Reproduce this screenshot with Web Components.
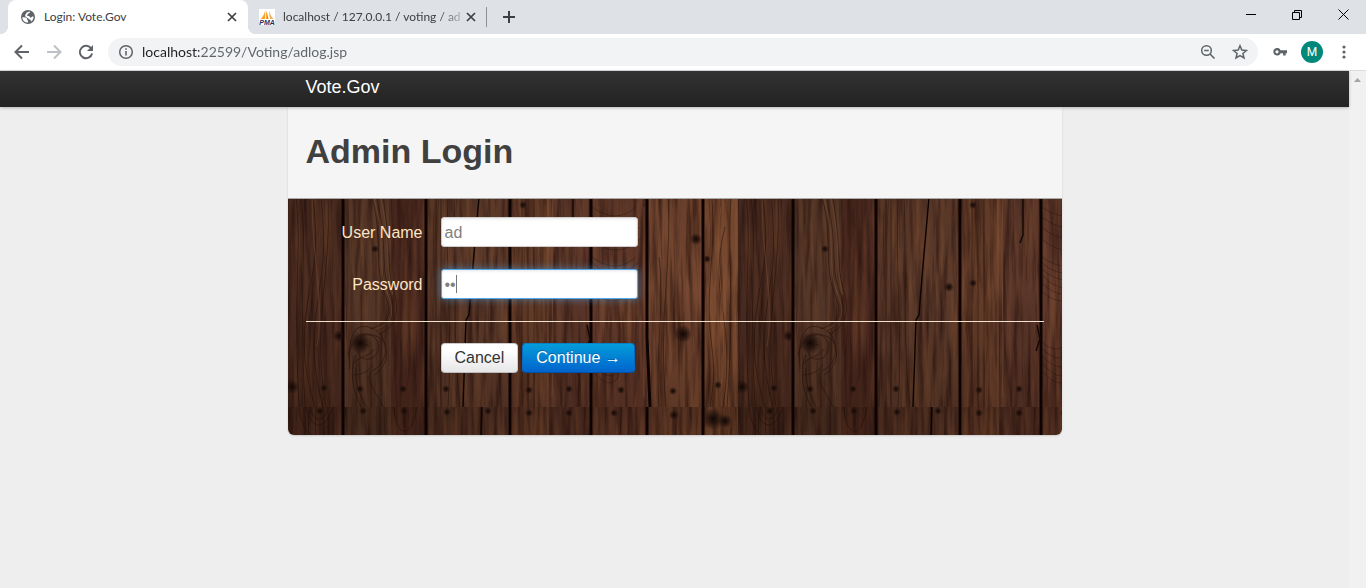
<!DOCTYPE html>
<html lang="en">
<head>
<meta charset="utf-8">
<title>Login: Vote.Gov</title>
<style>
html, body { margin: 0; height: 100%; }
body { font-family: "Liberation Sans", Arial, sans-serif; background: #eee; overflow: hidden; }
</style>
</head>
<body>
<browser-window>
  <tab-strip slot="tabs">
    <browser-tab active label="Login: Vote.Gov">
      <svg width="16" height="16" viewBox="0 0 16 16" aria-hidden="true"><circle cx="8" cy="8" r="7" fill="#5f6368"/><path d="M2.2 8.4c1.8-.5 3.500-.2 4.400.7.8.8.3 1.700 1.100 2.300.8.5.4 1.300.2 2.200C5 13.700 2.500 11.500 2.200 8.400zM6.200 4.300C7 3.200 8.400 2.500 9.800 2.500c.6.8-.2 1.500-1 1.800-.9.300-.5 1.100-1.300 1.400-.9.300-.4 1.200.5 1.200 1.200 0 1.700.4 1.900 1.200.3 1 1.300.7 1.800-.1.500-.7 1.200-.6 1.900-.2-.1 2.300-1.200 4-2.700 4.900.2-1-.2-1.700-1-2.100-1.200-.5-1.500-1.400-2.600-1.900C6.100 8.100 5 7.600 5.100 6.500c.1-.9.900-1.200 1.100-2.200z" fill="#fff"/></svg>
    </browser-tab>
    <browser-tab label="localhost / 127.0.0.1 / voting / ad">
      <svg width="16" height="16" viewBox="0 0 16 16" aria-hidden="true"><rect width="16" height="16" fill="#fff"/><path d="M6.200.8C5.800 4 4.200 7.600 1.600 10h4.600z" fill="#f9a326"/><path d="M7.200 2v8h2.300C8.900 7 8.300 4 7.200 2z" fill="#f48b00"/><path d="M10.200 1.500c-.2 3 .2 6 .9 8.500h3.400c-2.300-2.200-3.600-5.200-4.300-8.500z" fill="#f7b04a"/><text x="8" y="16" font-family="Liberation Sans, sans-serif" font-size="7" font-weight="700" font-style="italic" text-anchor="middle" fill="#2b2a5e">PMA</text></svg>
    </browser-tab>
  </tab-strip>
  <browser-toolbar slot="toolbar"></browser-toolbar>
  <site-navbar></site-navbar>
  <login-card heading="Admin Login"><login-form></login-form></login-card>
</browser-window>

<script>
const define = (name, markup, setup) => {
  const template = document.createElement('template');
  template.innerHTML = markup;
  customElements.define(name, class extends HTMLElement {
    constructor() {
      super();
      this.attachShadow({ mode: 'open' }).append(template.content.cloneNode(true));
    }
    connectedCallback() { if (setup) setup(this, this.shadowRoot); }
  });
};

define('browser-window', `
<style>
:host { display: flex; flex-direction: column; min-height: 100vh; }
.view { flex: 1; display: flex; border-top: 1px solid #dadce0; }
main { flex: 1; min-width: 0; background: #eee; }
.track { flex: 0 0 17px; background: #f1f1f1; text-align: center; }
.track svg { display: block; }
</style>
<slot name="tabs"></slot>
<slot name="toolbar"></slot>
<div class="view">
  <main><slot></slot></main>
  <div class="track" aria-hidden="true"><svg width="17" height="17"><path d="M5 11h7L8.500 7z" fill="#a3a3a3"/></svg></div>
</div>`);

define('tab-strip', `
<style>
:host { display: flex; height: 34px; background: #dee1e6; padding-left: 8px; }
button { border: 0; background: none; padding: 0; display: grid; place-items: center; }
.new { width: 45px; border-left: 1px solid #8d9095; height: 20px; margin-top: 7px; }
.caption { margin-left: auto; display: flex; }
.caption button { width: 46px; height: 29px; }
</style>
<slot></slot>
<button class="new" aria-label="New tab"><svg width="14" height="14"><path d="M7 1v12M1 7h12" stroke="#3c4043" stroke-width="2"/></svg></button>
<div class="caption">
  <button aria-label="Minimize"><svg width="10" height="11"><path d="M0 5.500h10" stroke="#000"/></svg></button>
  <button aria-label="Restore"><svg width="10" height="10"><path d="M.5 2.500h7v7h-7zM2.500 2.500v-2h7v7h-2" fill="none" stroke="#000"/></svg></button>
  <button aria-label="Close"><svg width="11" height="11"><path d="M.5.5l10 10M10.500.5l-10 10" stroke="#000"/></svg></button>
</div>`);

define('browser-tab', `
<style>
:host { display: flex; align-items: center; width: 240px; height: 34px; box-sizing: border-box; padding: 0 10px 0 12px; color: #3c4043; font: 12px/16px Lato, "Noto Sans", sans-serif; }
:host([active]) { background: #fff; border-radius: 8px 8px 0 0; position: relative; }
:host([active])::before, :host([active])::after { content: ""; position: absolute; bottom: 0; width: 8px; height: 8px; }
:host([active])::before { left: -8px; background: radial-gradient(circle at 0 0, #dee1e600 8px, #fff 8px); }
:host([active])::after { right: -8px; background: radial-gradient(circle at 100% 0, #dee1e600 8px, #fff 8px); }
slot { display: block; flex: 0 0 16px; height: 16px; }
.label { flex: 1; overflow: hidden; white-space: nowrap; margin-left: 8px; }
:host(:not([active])) { width: 238px; padding: 0 9px 0 11px; }
:host(:not([active])) .label { -webkit-mask: linear-gradient(90deg, #000 156px, #0003 180px); mask: linear-gradient(90deg, #000 156px, #0003 180px); }
button { border: 0; background: none; padding: 0; width: 12px; height: 12px; flex: none; }
button svg { display: block; }
</style>
<slot></slot>
<span class="label"></span>
<button aria-label="Close tab"><svg width="12" height="12"><path d="M2 2l8 8M10 2l-8 8" stroke="#3c4043" stroke-width="1.700"/></svg></button>`,
(host, root) => { root.querySelector('.label').textContent = host.getAttribute('label'); });

define('browser-toolbar', `
<style>
:host { display: flex; align-items: center; height: 36px; background: #fff; padding: 0 12px; }
button { border: 0; background: none; padding: 0; width: 20px; height: 20px; flex: none; }
svg { display: block; }
.nav { display: flex; gap: 12px; }
.omnibox { flex: 1; display: flex; align-items: center; height: 28px; margin: 0 12px; padding: 0 8px; border-radius: 14px; background: #f1f3f4; }
input { flex: 1; min-width: 0; border: 0; outline: 0; padding: 0; margin: 0 6px; height: 20px; font: 14px/20px Lato, "Noto Sans", sans-serif; color: #5f6368;
  background: linear-gradient(90deg, #202124 57px, #5f6368 57px); -webkit-background-clip: text; background-clip: text; -webkit-text-fill-color: transparent; }
.end { display: flex; gap: 12px; }
.avatar { width: 22px; height: 22px; border-radius: 50%; background: #00897b; color: #fff; font: 12px/22px Roboto, sans-serif; text-align: center; }
.right { display: flex; align-items: center; gap: 11px; }
</style>
<div class="nav">
  <button aria-label="Back"><svg width="20" height="20"><path d="M17 10H4M10 3.500L3.500 10l6.500 6.500" fill="none" stroke="#5f6368" stroke-width="2"/></svg></button>
  <button aria-label="Forward"><svg width="20" height="20"><path d="M3 10h13M10 3.500l6.500 6.500-6.500 6.500" fill="none" stroke="#bdc1c6" stroke-width="2"/></svg></button>
  <button aria-label="Reload"><svg width="20" height="20"><path d="M15.300 6.700A6.200 6.200 0 1 0 16.100 11.500" fill="none" stroke="#5f6368" stroke-width="2"/><path d="M17 3v6h-6z" fill="#5f6368"/></svg></button>
</div>
<div class="omnibox">
  <button aria-label="View site information"><svg width="20" height="20"><circle cx="10" cy="10" r="6.300" fill="none" stroke="#5f6368" stroke-width="1.500"/><path d="M10 9v4.500M10 6.200v1.600" stroke="#5f6368" stroke-width="1.600"/></svg></button>
  <input type="text" aria-label="Address" spellcheck="false" value="localhost:22599/Voting/adlog.jsp">
  <div class="end">
    <button aria-label="Zoom"><svg width="20" height="20"><circle cx="8.500" cy="8.500" r="4.800" fill="none" stroke="#5f6368" stroke-width="1.500"/><path d="M12 12l4.500 4.500M6.200 8.500h4.600" stroke="#5f6368" stroke-width="1.600"/></svg></button>
    <button aria-label="Bookmark this page"><svg width="20" height="20"><path d="M10 3.800l1.800 4.300 4.600.4-3.500 3 1.100 4.500-4-2.400-4 2.400 1.100-4.500-3.500-3 4.600-.4z" fill="none" stroke="#5f6368" stroke-width="1.500"/></svg></button>
  </div>
</div>
<div class="right">
  <button aria-label="Passwords"><svg width="20" height="20"><path d="M10.600 8.300H17v3h-1.300v2.200h-2.600v-2.200h-2.500a3.800 3.800 0 1 1 0-3zM7 8.200a1.600 1.600 0 1 0 0 3.200 1.600 1.600 0 0 0 0-3.200z" fill="#5f6368"/></svg></button>
  <button class="avatar" aria-label="Profile">M</button>
  <button aria-label="Menu"><svg width="20" height="20" fill="#5f6368"><circle cx="10" cy="5" r="1.600"/><circle cx="10" cy="10" r="1.600"/><circle cx="10" cy="15" r="1.600"/></svg></button>
</div>`);

define('site-navbar', `
<style>
:host { display: block; height: 36px; position: relative; z-index: 1; background: linear-gradient(#333, #222); box-shadow: 0 1px 3px rgba(0,0,0,.25); }
nav { max-width: 738px; margin: 0 auto; padding: 0 18px; }
a { color: #fff; text-decoration: none; font-size: 18px; line-height: 32px; display: inline-block; }
</style>
<nav><a href="#">Vote.Gov</a></nav>`);

define('wood-panels', `
<style>
:host { display: block; overflow: hidden; }
svg { display: block; width: 100%; height: 100%; }
</style>
<svg aria-hidden="true">
  <defs>
    <filter id="grain" x="0" y="0" width="100%" height="100%" color-interpolation-filters="sRGB">
      <feTurbulence type="fractalNoise" baseFrequency="0.2 0.012" numOctaves="4" seed="7"/>
      <feColorMatrix values="0 0 0 0 .13  0 0 0 0 .05  0 0 0 0 .035  2.200 0 0 0 -.850"/>
    </filter>
    <filter id="sheen" x="0" y="0" width="100%" height="100%" color-interpolation-filters="sRGB">
      <feTurbulence type="fractalNoise" baseFrequency="0.14 0.012" numOctaves="4" seed="23"/>
      <feColorMatrix values="0 0 0 0 .6  0 0 0 0 .37  0 0 0 0 .22  0 2.200 0 0 -1"/>
    </filter>
    <linearGradient id="shade" x2="0" y2="1"><stop offset="0" stop-color="#140500" stop-opacity=".3"/><stop offset=".3" stop-color="#140500" stop-opacity=".08"/><stop offset=".6" stop-color="#140500" stop-opacity="0"/><stop offset="1" stop-color="#140500" stop-opacity=".2"/></linearGradient>
    <linearGradient id="side"><stop offset="0" stop-color="#100400" stop-opacity=".22"/><stop offset=".7" stop-color="#100400" stop-opacity="0"/></linearGradient>
    <radialGradient id="knot"><stop offset="0" stop-color="#100604"/><stop offset=".45" stop-color="#1e0f0a" stop-opacity=".75"/><stop offset="1" stop-color="#1e0f0a" stop-opacity="0"/></radialGradient>
    <pattern id="planks" width="450" height="300" patternUnits="userSpaceOnUse">
      <path fill="#593629" d="M0 0h55v300H0z"/>
      <path fill="#61402f" d="M55 0h48v300H55z"/>
      <path fill="#542f24" d="M103 0h35v300h-35z"/>
      <path fill="#633f2e" d="M138 0h84v300h-84z"/>
      <path fill="#69402c" d="M222 0h39v300h-39z"/>
      <path fill="#5c372a" d="M261 0h41v300h-41z"/>
      <path fill="#61392a" d="M302 0h57v300h-57z"/>
      <path fill="#70442f" d="M359 0h56v300h-56z"/>
      <path fill="#794a30" d="M415 0h35v300h-35z"/>
      <g opacity=".7"><rect width="450" height="300" filter="url(#grain)"/></g>
      <g opacity=".45"><rect width="450" height="300" filter="url(#sheen)"/></g>
      <g fill="none" stroke="#241008" stroke-opacity=".55">
        <path d="M22 0c-8 60 14 110 2 170s-9 90 3 130M28 0c-4 50 14 112 5 172s-10 80 2 128M35 0c2 60 9 100 3 160s-8 90 0 140M8 90c6 50-3 90 3 210M13 90c6 50-2 90 4 210"/>
        <path d="M84 90c11 40 2 70 12 95s4 31-14 37M88 90c12 40 4 70 13 93s2 35-12 40M95 90c8 50 3 70 11 95s-4 38-15 42"/>
        <path d="M62 262c-3-42 9-47 24-40s15 33 1 40 1 22 8 38M60 248c4-18 18-24 30-18s12 28-4 38M69 230c10-8 24 0 21 13s-18 11-20 2 7-10 11-6M66 256c6-7 15-6 20-14M65 268c6 0 16-3 20-10M73 300c-10-20-11-40-5-52M78 300c-9-18-11-27-10-39"/>
        <path d="M18 0c4 14 8 18 13 18s10-6 14-18M22 0c3 9 5 12 9 12s7-4 9-12M11 0c2 20 10 30 20 30M106 0c2 20 6 24 11 24s9-8 12-24"/>
        <path stroke-opacity=".4" d="M304 150q24 18 44 0M304 156q24 20 46 0M304 162q24 22 48 0M304 168q24 26 46 0M304 176q22 22 42 0M304 185q22 18 40 0M304 235q16 14 24 0M304 242q20 18 30 0M304 249q22 22 32 0M304 256q22 26 30 0M304 264q22 24 28 0M304 100q24 18 44 0M304 110q24 20 46 0M304 120q24 22 48 0M304 132q24 22 48 0"/>
        <path d="M424 92c4 50-6 90-2 130s6 40 0 78M437 120c-18 70 12 90-2 180M443 90c-4 60 4 100-4 210M380 90c4 70-10 120-2 210M371 150c6 50-4 90 0 150"/>
        <path d="M148 90v210M153 90v210M160 90c-3 70 5 140 0 210M166 90c3 70-2 140 6 210M234 90v210M240 90v210M246 90v210"/>
      </g>
      <g fill="none" stroke="#8a5938" stroke-opacity=".6"><path d="M86 92c12 40 3 68 13 93s3 33-12 38M93 92c10 44 4 70 12 96M57 200v100M25 90c-4 40 12 100 4 150M260 0v300M265 90c-3 80 2 140-1 200M448 90v210M362 240v60M356 100v190M433 100c-9 60 9 110 0 180"/></g>
      <rect width="450" height="300" fill="url(#shade)"/>
      <rect width="450" height="300" fill="url(#side)"/>
      <g fill="none" stroke="#0d0302" stroke-width="3"><path d="M55 0v300M138 0v300M222 0v300M303 0v300M359 0v230l3 70M415 0v300"/></g>
      <path d="M194 0l-3 90-7 80-3 38-3 5-3 87" fill="none" stroke="#0d0402" stroke-width="1.500"/>
      <path d="M285 92v36l-3 8M299 218l3 14-4 12" fill="none" stroke="#150704" stroke-width="1.500"/>
      <g fill="url(#knot)"><circle cx="72" cy="236" r="11"/><circle cx="51" cy="229" r="6"/><circle cx="4" cy="280" r="7"/><circle cx="395" cy="227" r="9"/><circle cx="408" cy="132" r="6"/><circle cx="419" cy="152" r="4"/><circle cx="87" cy="142" r="4"/><circle cx="235" cy="98" r="4"/><circle cx="235" cy="176" r="4"/><circle cx="211" cy="180" r="5"/><circle cx="425" cy="12" r="11"/><circle cx="437" cy="14" r="7"/></g>
      <g fill="url(#knot)"><circle cx="36" cy="281" r="4"/><circle cx="72" cy="282" r="4"/><circle cx="115" cy="282" r="4"/><circle cx="158" cy="282" r="4"/><circle cx="241" cy="283" r="4"/><circle cx="281" cy="282" r="4"/><circle cx="333" cy="283" r="4"/><circle cx="385" cy="284" r="4"/><circle cx="430" cy="278" r="4"/><circle cx="32" cy="4" r="4"/><circle cx="75" cy="4" r="4"/><circle cx="116" cy="4" r="4"/><circle cx="159" cy="5" r="4"/><circle cx="200" cy="4" r="4"/><circle cx="241" cy="6" r="4"/><circle cx="281" cy="6" r="4"/><circle cx="326" cy="6" r="4"/><circle cx="386" cy="8" r="5"/></g>
    </pattern>
  </defs>
  <rect width="100%" height="100%" fill="url(#planks)"/>
</svg>`);

define('login-card', `
<style>
:host { display: block; position: relative; max-width: 774px; margin: 0 auto; border-radius: 0 0 6px 6px; box-shadow: 0 1px 2px rgba(0,0,0,.15); }
wood-panels { position: absolute; inset: 0; border-radius: 0 0 6px 6px; }
header { position: relative; background: #f5f5f5; border-bottom: 1px solid #aaa; padding: 23px 18px 25px; }
h1 { margin: 0; font-size: 34px; line-height: 43px; color: #404040; }
section { position: relative; }
</style>
<wood-panels></wood-panels>
<header><h1></h1></header>
<section><slot></slot></section>`,
(host, root) => { root.querySelector('h1').textContent = host.getAttribute('heading'); });

define('login-form', `
<style>
:host { display: block; color: #ffe4c4; font-size: 16px; }
form { padding: 18px 18px 62px; }
.row { display: grid; grid-template-columns: 117px 197px; column-gap: 18px; align-items: center; margin-bottom: 22px; }
label { text-align: right; line-height: 20px; padding-top: 2px; }
.field { position: relative; }
input { display: block; width: 100%; height: 30px; box-sizing: border-box; border: 1px solid #ccc; border-radius: 3px; padding: 5px 3px 3px; background: #fff; color: #808080; font: 16px/20px "Liberation Sans", Arial, sans-serif; box-shadow: inset 0 1px 3px rgba(0,0,0,.1); outline: 0; }
input.focused { border-color: #52a8ec; box-shadow: inset 0 1px 3px rgba(0,0,0,.1), 0 0 8px rgba(82,168,236,.6); }
.caret { position: absolute; left: 15px; top: 6px; width: 1px; height: 18px; background: #777; }
hr { border: 0; height: 1px; margin: 0 0 21px; background: #f0e2cf; }
.actions { display: flex; gap: 4px; padding-left: 135px; }
button { height: 30px; box-sizing: border-box; border: 1px solid #ccc; border-bottom-color: #bbb; border-radius: 4px; font: 16px/20px "Liberation Sans", Arial, sans-serif; color: #333; background: linear-gradient(#fff 25%, #e6e6e6); padding: 4px 13px; }
.primary { color: #fff; border-color: #0a7fc4 #0868c4 #0050a8; background: linear-gradient(#049cdb, #0064cd); text-shadow: 0 -1px 0 rgba(0,0,0,.25); }
</style>
<form>
  <div class="row"><label for="user">User Name</label><div class="field"><input id="user" type="text" value="ad"></div></div>
  <div class="row"><label for="pass">Password</label><div class="field"><input id="pass" class="focused" type="password" value="ad"><span class="caret"></span></div></div>
  <hr>
  <div class="actions"><button type="reset">Cancel</button><button type="submit" class="primary">Continue →</button></div>
</form>`);
</script>
</body>
</html>
